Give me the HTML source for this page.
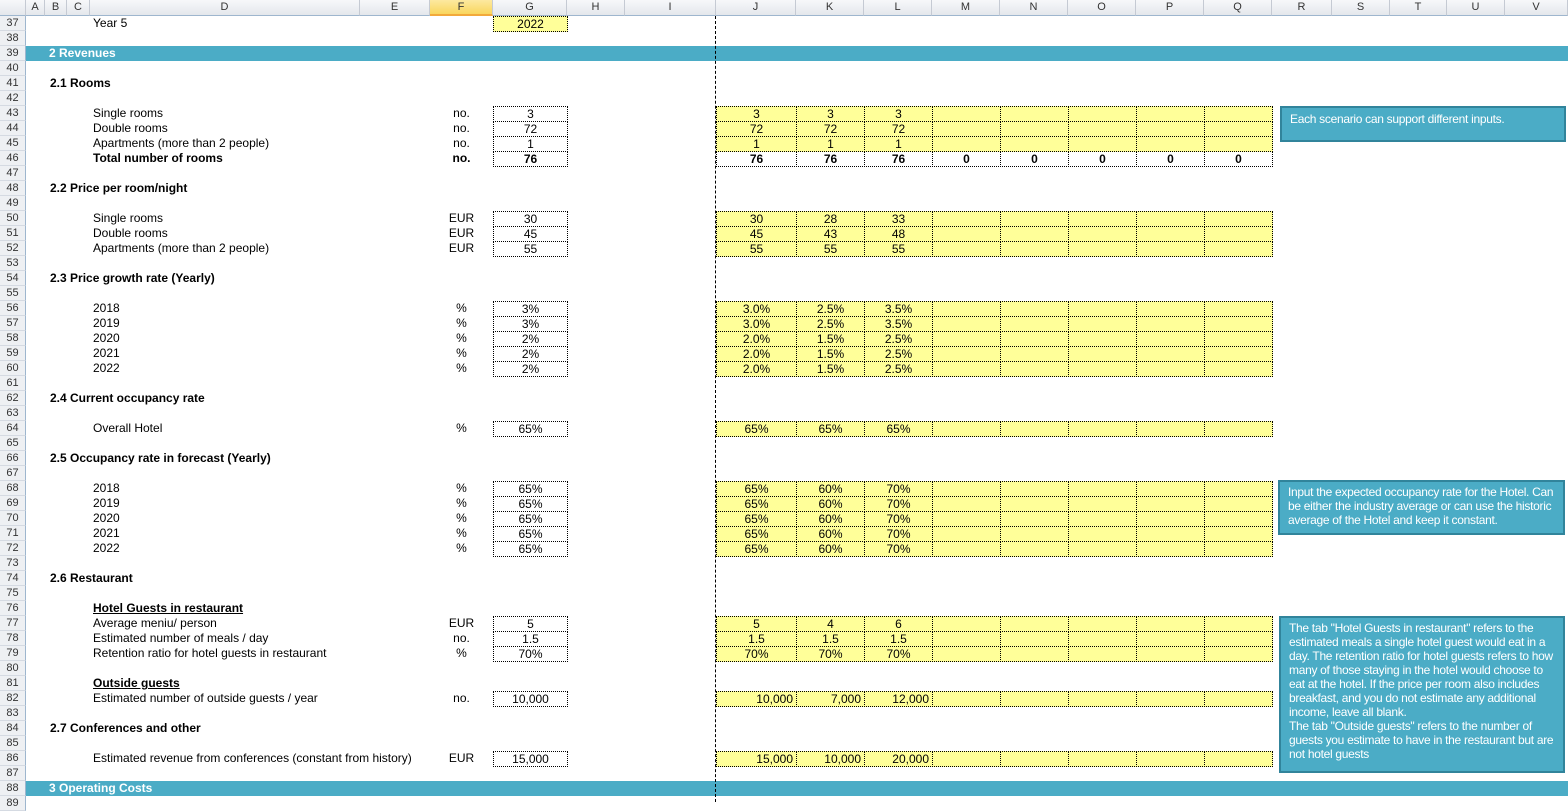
<!DOCTYPE html>
<html><head><meta charset="utf-8">
<style>
*{margin:0;padding:0;box-sizing:border-box}
body{width:1568px;height:802px;overflow:hidden;background:#fff;font-family:"Liberation Sans",Arial,sans-serif;font-size:12px;color:#000;position:relative}
.a{position:absolute;white-space:nowrap}
.ch{position:absolute;top:0;height:16px;background:linear-gradient(#f7f8fa,#e4e7ec);border-right:1px solid #c5cad3;border-bottom:1px solid #9eb6ce;text-align:center;font-size:11px;line-height:15px;color:#333}
.rh{position:absolute;left:0;width:26px;height:15px;background:#eef0f3;border-right:1px solid #9eb6ce;border-bottom:1px solid #d5dae2;font-size:11px;line-height:14px;color:#333;text-align:center}
.t{position:absolute;height:15px;line-height:15px;white-space:nowrap}
.b{font-weight:bold}
.u{position:absolute;left:430px;width:63px;text-align:center;height:15px;line-height:15px}
.c{position:absolute;height:16px;border:1px dotted #000;text-align:center;line-height:14px}
.y{background:#ffff99}
.bar{position:absolute;left:26px;width:1542px;height:15px;background:#4bacc6;color:#fff;font-weight:bold;line-height:15px;padding-left:23px}
.note{position:absolute;background:#4bacc6;border:2px solid #31849b;color:#fff;font-size:12px;line-height:14px;padding:3px 8px;letter-spacing:-0.3px}
.dash{position:absolute;left:715px;top:16px;width:0;height:786px;border-left:1px dashed #000}
</style></head><body>
<!-- column headers -->
<div class="ch" style="left:0;width:26px"></div>
<div class="ch" style="left:26px;width:19px">A</div>
<div class="ch" style="left:45px;width:22px">B</div>
<div class="ch" style="left:67px;width:23px">C</div>
<div class="ch" style="left:90px;width:270px">D</div>
<div class="ch" style="left:360px;width:70px">E</div>
<div class="ch" style="left:430px;width:63px;background:linear-gradient(#fde9a0,#f9d65e);border-bottom:2px solid #f2a93b">F</div>
<div class="ch" style="left:493px;width:74px">G</div>
<div class="ch" style="left:567px;width:58px">H</div>
<div class="ch" style="left:625px;width:91px">I</div>
<div class="ch" style="left:716px;width:80px">J</div>
<div class="ch" style="left:796px;width:68px">K</div>
<div class="ch" style="left:864px;width:68px">L</div>
<div class="ch" style="left:932px;width:68px">M</div>
<div class="ch" style="left:1000px;width:68px">N</div>
<div class="ch" style="left:1068px;width:68px">O</div>
<div class="ch" style="left:1136px;width:68px">P</div>
<div class="ch" style="left:1204px;width:68px">Q</div>
<div class="ch" style="left:1272px;width:60px">R</div>
<div class="ch" style="left:1332px;width:58px">S</div>
<div class="ch" style="left:1390px;width:57px">T</div>
<div class="ch" style="left:1447px;width:58px">U</div>
<div class="ch" style="left:1505px;width:63px">V</div>
<!-- row headers -->
<div class="rh" style="top:16px">37</div><div class="rh" style="top:31px">38</div><div class="rh" style="top:46px">39</div><div class="rh" style="top:61px">40</div><div class="rh" style="top:76px">41</div><div class="rh" style="top:91px">42</div><div class="rh" style="top:106px">43</div><div class="rh" style="top:121px">44</div><div class="rh" style="top:136px">45</div><div class="rh" style="top:151px">46</div><div class="rh" style="top:166px">47</div><div class="rh" style="top:181px">48</div><div class="rh" style="top:196px">49</div><div class="rh" style="top:211px">50</div><div class="rh" style="top:226px">51</div><div class="rh" style="top:241px">52</div><div class="rh" style="top:256px">53</div><div class="rh" style="top:271px">54</div><div class="rh" style="top:286px">55</div><div class="rh" style="top:301px">56</div><div class="rh" style="top:316px">57</div><div class="rh" style="top:331px">58</div><div class="rh" style="top:346px">59</div><div class="rh" style="top:361px">60</div><div class="rh" style="top:376px">61</div><div class="rh" style="top:391px">62</div><div class="rh" style="top:406px">63</div><div class="rh" style="top:421px">64</div><div class="rh" style="top:436px">65</div><div class="rh" style="top:451px">66</div><div class="rh" style="top:466px">67</div><div class="rh" style="top:481px">68</div><div class="rh" style="top:496px">69</div><div class="rh" style="top:511px">70</div><div class="rh" style="top:526px">71</div><div class="rh" style="top:541px">72</div><div class="rh" style="top:556px">73</div><div class="rh" style="top:571px">74</div><div class="rh" style="top:586px">75</div><div class="rh" style="top:601px">76</div><div class="rh" style="top:616px">77</div><div class="rh" style="top:631px">78</div><div class="rh" style="top:646px">79</div><div class="rh" style="top:661px">80</div><div class="rh" style="top:676px">81</div><div class="rh" style="top:691px">82</div><div class="rh" style="top:706px">83</div><div class="rh" style="top:721px">84</div><div class="rh" style="top:736px">85</div><div class="rh" style="top:751px">86</div><div class="rh" style="top:766px">87</div><div class="rh" style="top:781px">88</div><div class="rh" style="top:796px">89</div>

<!-- bars -->
<div class="bar" style="top:46px">2 Revenues</div>
<div class="bar" style="top:781px">3 Operating Costs</div>
<div class="dash"></div>

<!-- row 37 -->
<div class="t" style="left:93px;top:16px">Year 5</div>
<div class="c y" style="left:493px;top:16px;width:75px">2022</div>

<div class="t b" style="left:50px;top:76px">2.1 Rooms</div>
<div class="t" style="left:93px;top:106px">Single rooms</div><div class="u" style="top:106px">no.</div>
<div class="t" style="left:93px;top:121px">Double rooms</div><div class="u" style="top:121px">no.</div>
<div class="t" style="left:93px;top:136px">Apartments (more than 2 people)</div><div class="u" style="top:136px">no.</div>
<div class="t b" style="left:93px;top:151px">Total number of rooms</div><div class="u b" style="top:151px">no.</div>
<div class="c" style="left:493px;top:106px;width:75px">3</div>
<div class="c" style="left:493px;top:121px;width:75px">72</div>
<div class="c" style="left:493px;top:136px;width:75px">1</div>
<div class="c b" style="left:493px;top:151px;width:75px">76</div>

<div class="t b" style="left:50px;top:181px">2.2 Price per room/night</div>
<div class="t" style="left:93px;top:211px">Single rooms</div><div class="u" style="top:211px">EUR</div>
<div class="t" style="left:93px;top:226px">Double rooms</div><div class="u" style="top:226px">EUR</div>
<div class="t" style="left:93px;top:241px">Apartments (more than 2 people)</div><div class="u" style="top:241px">EUR</div>
<div class="c" style="left:493px;top:211px;width:75px">30</div>
<div class="c" style="left:493px;top:226px;width:75px">45</div>
<div class="c" style="left:493px;top:241px;width:75px">55</div>

<div class="t b" style="left:50px;top:271px">2.3 Price growth rate (Yearly)</div>
<div class="t" style="left:93px;top:301px">2018</div><div class="u" style="top:301px">%</div>
<div class="t" style="left:93px;top:316px">2019</div><div class="u" style="top:316px">%</div>
<div class="t" style="left:93px;top:331px">2020</div><div class="u" style="top:331px">%</div>
<div class="t" style="left:93px;top:346px">2021</div><div class="u" style="top:346px">%</div>
<div class="t" style="left:93px;top:361px">2022</div><div class="u" style="top:361px">%</div>
<div class="c" style="left:493px;top:301px;width:75px">3%</div>
<div class="c" style="left:493px;top:316px;width:75px">3%</div>
<div class="c" style="left:493px;top:331px;width:75px">2%</div>
<div class="c" style="left:493px;top:346px;width:75px">2%</div>
<div class="c" style="left:493px;top:361px;width:75px">2%</div>

<div class="t b" style="left:50px;top:391px">2.4 Current occupancy rate</div>
<div class="t" style="left:93px;top:421px">Overall Hotel</div><div class="u" style="top:421px">%</div>
<div class="c" style="left:493px;top:421px;width:75px">65%</div>

<div class="t b" style="left:50px;top:451px">2.5 Occupancy rate in forecast (Yearly)</div>
<div class="t" style="left:93px;top:481px">2018</div><div class="u" style="top:481px">%</div>
<div class="t" style="left:93px;top:496px">2019</div><div class="u" style="top:496px">%</div>
<div class="t" style="left:93px;top:511px">2020</div><div class="u" style="top:511px">%</div>
<div class="t" style="left:93px;top:526px">2021</div><div class="u" style="top:526px">%</div>
<div class="t" style="left:93px;top:541px">2022</div><div class="u" style="top:541px">%</div>
<div class="c" style="left:493px;top:481px;width:75px">65%</div>
<div class="c" style="left:493px;top:496px;width:75px">65%</div>
<div class="c" style="left:493px;top:511px;width:75px">65%</div>
<div class="c" style="left:493px;top:526px;width:75px">65%</div>
<div class="c" style="left:493px;top:541px;width:75px">65%</div>

<div class="t b" style="left:50px;top:571px">2.6 Restaurant</div>
<div class="t b" style="left:93px;top:601px;text-decoration:underline">Hotel Guests in restaurant</div>
<div class="t" style="left:93px;top:616px">Average meniu/ person</div><div class="u" style="top:616px">EUR</div>
<div class="t" style="left:93px;top:631px">Estimated number of meals / day</div><div class="u" style="top:631px">no.</div>
<div class="t" style="left:93px;top:646px">Retention ratio for hotel guests in restaurant</div><div class="u" style="top:646px">%</div>
<div class="c" style="left:493px;top:616px;width:75px">5</div>
<div class="c" style="left:493px;top:631px;width:75px">1.5</div>
<div class="c" style="left:493px;top:646px;width:75px">70%</div>
<div class="t b" style="left:93px;top:676px;text-decoration:underline">Outside guests</div>
<div class="t" style="left:93px;top:691px">Estimated number of outside guests / year</div><div class="u" style="top:691px">no.</div>
<div class="c" style="left:493px;top:691px;width:75px">10,000</div>

<div class="t b" style="left:50px;top:721px">2.7 Conferences and other</div>
<div class="t" style="left:93px;top:751px">Estimated revenue from conferences (constant from history)</div><div class="u" style="top:751px">EUR</div>
<div class="c" style="left:493px;top:751px;width:75px">15,000</div>

<!-- scenario grid J..Q -->
<!-- rows 43-45 -->
<div class="c y" style="left:716px;top:106px;width:81px">3</div><div class="c y" style="left:796px;top:106px;width:69px">3</div><div class="c y" style="left:864px;top:106px;width:69px">3</div><div class="c y" style="left:932px;top:106px;width:69px"></div><div class="c y" style="left:1000px;top:106px;width:69px"></div><div class="c y" style="left:1068px;top:106px;width:69px"></div><div class="c y" style="left:1136px;top:106px;width:69px"></div><div class="c y" style="left:1204px;top:106px;width:69px"></div>
<div class="c y" style="left:716px;top:121px;width:81px">72</div><div class="c y" style="left:796px;top:121px;width:69px">72</div><div class="c y" style="left:864px;top:121px;width:69px">72</div><div class="c y" style="left:932px;top:121px;width:69px"></div><div class="c y" style="left:1000px;top:121px;width:69px"></div><div class="c y" style="left:1068px;top:121px;width:69px"></div><div class="c y" style="left:1136px;top:121px;width:69px"></div><div class="c y" style="left:1204px;top:121px;width:69px"></div>
<div class="c y" style="left:716px;top:136px;width:81px">1</div><div class="c y" style="left:796px;top:136px;width:69px">1</div><div class="c y" style="left:864px;top:136px;width:69px">1</div><div class="c y" style="left:932px;top:136px;width:69px"></div><div class="c y" style="left:1000px;top:136px;width:69px"></div><div class="c y" style="left:1068px;top:136px;width:69px"></div><div class="c y" style="left:1136px;top:136px;width:69px"></div><div class="c y" style="left:1204px;top:136px;width:69px"></div>
<div class="c b" style="left:716px;top:151px;width:81px">76</div><div class="c b" style="left:796px;top:151px;width:69px">76</div><div class="c b" style="left:864px;top:151px;width:69px">76</div><div class="c b" style="left:932px;top:151px;width:69px">0</div><div class="c b" style="left:1000px;top:151px;width:69px">0</div><div class="c b" style="left:1068px;top:151px;width:69px">0</div><div class="c b" style="left:1136px;top:151px;width:69px">0</div><div class="c b" style="left:1204px;top:151px;width:69px">0</div>
<!-- 50-52 -->
<div class="c y" style="left:716px;top:211px;width:81px">30</div><div class="c y" style="left:796px;top:211px;width:69px">28</div><div class="c y" style="left:864px;top:211px;width:69px">33</div><div class="c y" style="left:932px;top:211px;width:69px"></div><div class="c y" style="left:1000px;top:211px;width:69px"></div><div class="c y" style="left:1068px;top:211px;width:69px"></div><div class="c y" style="left:1136px;top:211px;width:69px"></div><div class="c y" style="left:1204px;top:211px;width:69px"></div>
<div class="c y" style="left:716px;top:226px;width:81px">45</div><div class="c y" style="left:796px;top:226px;width:69px">43</div><div class="c y" style="left:864px;top:226px;width:69px">48</div><div class="c y" style="left:932px;top:226px;width:69px"></div><div class="c y" style="left:1000px;top:226px;width:69px"></div><div class="c y" style="left:1068px;top:226px;width:69px"></div><div class="c y" style="left:1136px;top:226px;width:69px"></div><div class="c y" style="left:1204px;top:226px;width:69px"></div>
<div class="c y" style="left:716px;top:241px;width:81px">55</div><div class="c y" style="left:796px;top:241px;width:69px">55</div><div class="c y" style="left:864px;top:241px;width:69px">55</div><div class="c y" style="left:932px;top:241px;width:69px"></div><div class="c y" style="left:1000px;top:241px;width:69px"></div><div class="c y" style="left:1068px;top:241px;width:69px"></div><div class="c y" style="left:1136px;top:241px;width:69px"></div><div class="c y" style="left:1204px;top:241px;width:69px"></div>
<!-- 56-60 -->
<div class="c y" style="left:716px;top:301px;width:81px">3.0%</div><div class="c y" style="left:796px;top:301px;width:69px">2.5%</div><div class="c y" style="left:864px;top:301px;width:69px">3.5%</div><div class="c y" style="left:932px;top:301px;width:69px"></div><div class="c y" style="left:1000px;top:301px;width:69px"></div><div class="c y" style="left:1068px;top:301px;width:69px"></div><div class="c y" style="left:1136px;top:301px;width:69px"></div><div class="c y" style="left:1204px;top:301px;width:69px"></div>
<div class="c y" style="left:716px;top:316px;width:81px">3.0%</div><div class="c y" style="left:796px;top:316px;width:69px">2.5%</div><div class="c y" style="left:864px;top:316px;width:69px">3.5%</div><div class="c y" style="left:932px;top:316px;width:69px"></div><div class="c y" style="left:1000px;top:316px;width:69px"></div><div class="c y" style="left:1068px;top:316px;width:69px"></div><div class="c y" style="left:1136px;top:316px;width:69px"></div><div class="c y" style="left:1204px;top:316px;width:69px"></div>
<div class="c y" style="left:716px;top:331px;width:81px">2.0%</div><div class="c y" style="left:796px;top:331px;width:69px">1.5%</div><div class="c y" style="left:864px;top:331px;width:69px">2.5%</div><div class="c y" style="left:932px;top:331px;width:69px"></div><div class="c y" style="left:1000px;top:331px;width:69px"></div><div class="c y" style="left:1068px;top:331px;width:69px"></div><div class="c y" style="left:1136px;top:331px;width:69px"></div><div class="c y" style="left:1204px;top:331px;width:69px"></div>
<div class="c y" style="left:716px;top:346px;width:81px">2.0%</div><div class="c y" style="left:796px;top:346px;width:69px">1.5%</div><div class="c y" style="left:864px;top:346px;width:69px">2.5%</div><div class="c y" style="left:932px;top:346px;width:69px"></div><div class="c y" style="left:1000px;top:346px;width:69px"></div><div class="c y" style="left:1068px;top:346px;width:69px"></div><div class="c y" style="left:1136px;top:346px;width:69px"></div><div class="c y" style="left:1204px;top:346px;width:69px"></div>
<div class="c y" style="left:716px;top:361px;width:81px">2.0%</div><div class="c y" style="left:796px;top:361px;width:69px">1.5%</div><div class="c y" style="left:864px;top:361px;width:69px">2.5%</div><div class="c y" style="left:932px;top:361px;width:69px"></div><div class="c y" style="left:1000px;top:361px;width:69px"></div><div class="c y" style="left:1068px;top:361px;width:69px"></div><div class="c y" style="left:1136px;top:361px;width:69px"></div><div class="c y" style="left:1204px;top:361px;width:69px"></div>
<!-- 64 -->
<div class="c y" style="left:716px;top:421px;width:81px">65%</div><div class="c y" style="left:796px;top:421px;width:69px">65%</div><div class="c y" style="left:864px;top:421px;width:69px">65%</div><div class="c y" style="left:932px;top:421px;width:69px"></div><div class="c y" style="left:1000px;top:421px;width:69px"></div><div class="c y" style="left:1068px;top:421px;width:69px"></div><div class="c y" style="left:1136px;top:421px;width:69px"></div><div class="c y" style="left:1204px;top:421px;width:69px"></div>
<!-- 68-72 -->
<div class="c y" style="left:716px;top:481px;width:81px">65%</div><div class="c y" style="left:796px;top:481px;width:69px">60%</div><div class="c y" style="left:864px;top:481px;width:69px">70%</div><div class="c y" style="left:932px;top:481px;width:69px"></div><div class="c y" style="left:1000px;top:481px;width:69px"></div><div class="c y" style="left:1068px;top:481px;width:69px"></div><div class="c y" style="left:1136px;top:481px;width:69px"></div><div class="c y" style="left:1204px;top:481px;width:69px"></div>
<div class="c y" style="left:716px;top:496px;width:81px">65%</div><div class="c y" style="left:796px;top:496px;width:69px">60%</div><div class="c y" style="left:864px;top:496px;width:69px">70%</div><div class="c y" style="left:932px;top:496px;width:69px"></div><div class="c y" style="left:1000px;top:496px;width:69px"></div><div class="c y" style="left:1068px;top:496px;width:69px"></div><div class="c y" style="left:1136px;top:496px;width:69px"></div><div class="c y" style="left:1204px;top:496px;width:69px"></div>
<div class="c y" style="left:716px;top:511px;width:81px">65%</div><div class="c y" style="left:796px;top:511px;width:69px">60%</div><div class="c y" style="left:864px;top:511px;width:69px">70%</div><div class="c y" style="left:932px;top:511px;width:69px"></div><div class="c y" style="left:1000px;top:511px;width:69px"></div><div class="c y" style="left:1068px;top:511px;width:69px"></div><div class="c y" style="left:1136px;top:511px;width:69px"></div><div class="c y" style="left:1204px;top:511px;width:69px"></div>
<div class="c y" style="left:716px;top:526px;width:81px">65%</div><div class="c y" style="left:796px;top:526px;width:69px">60%</div><div class="c y" style="left:864px;top:526px;width:69px">70%</div><div class="c y" style="left:932px;top:526px;width:69px"></div><div class="c y" style="left:1000px;top:526px;width:69px"></div><div class="c y" style="left:1068px;top:526px;width:69px"></div><div class="c y" style="left:1136px;top:526px;width:69px"></div><div class="c y" style="left:1204px;top:526px;width:69px"></div>
<div class="c y" style="left:716px;top:541px;width:81px">65%</div><div class="c y" style="left:796px;top:541px;width:69px">60%</div><div class="c y" style="left:864px;top:541px;width:69px">70%</div><div class="c y" style="left:932px;top:541px;width:69px"></div><div class="c y" style="left:1000px;top:541px;width:69px"></div><div class="c y" style="left:1068px;top:541px;width:69px"></div><div class="c y" style="left:1136px;top:541px;width:69px"></div><div class="c y" style="left:1204px;top:541px;width:69px"></div>
<!-- 77-79 -->
<div class="c y" style="left:716px;top:616px;width:81px">5</div><div class="c y" style="left:796px;top:616px;width:69px">4</div><div class="c y" style="left:864px;top:616px;width:69px">6</div><div class="c y" style="left:932px;top:616px;width:69px"></div><div class="c y" style="left:1000px;top:616px;width:69px"></div><div class="c y" style="left:1068px;top:616px;width:69px"></div><div class="c y" style="left:1136px;top:616px;width:69px"></div><div class="c y" style="left:1204px;top:616px;width:69px"></div>
<div class="c y" style="left:716px;top:631px;width:81px">1.5</div><div class="c y" style="left:796px;top:631px;width:69px">1.5</div><div class="c y" style="left:864px;top:631px;width:69px">1.5</div><div class="c y" style="left:932px;top:631px;width:69px"></div><div class="c y" style="left:1000px;top:631px;width:69px"></div><div class="c y" style="left:1068px;top:631px;width:69px"></div><div class="c y" style="left:1136px;top:631px;width:69px"></div><div class="c y" style="left:1204px;top:631px;width:69px"></div>
<div class="c y" style="left:716px;top:646px;width:81px">70%</div><div class="c y" style="left:796px;top:646px;width:69px">70%</div><div class="c y" style="left:864px;top:646px;width:69px">70%</div><div class="c y" style="left:932px;top:646px;width:69px"></div><div class="c y" style="left:1000px;top:646px;width:69px"></div><div class="c y" style="left:1068px;top:646px;width:69px"></div><div class="c y" style="left:1136px;top:646px;width:69px"></div><div class="c y" style="left:1204px;top:646px;width:69px"></div>
<!-- 82 -->
<div class="c y" style="left:716px;top:691px;width:81px;text-align:right;padding-right:3px">10,000</div><div class="c y" style="left:796px;top:691px;width:69px;text-align:right;padding-right:3px">7,000</div><div class="c y" style="left:864px;top:691px;width:69px;text-align:right;padding-right:3px">12,000</div><div class="c y" style="left:932px;top:691px;width:69px"></div><div class="c y" style="left:1000px;top:691px;width:69px"></div><div class="c y" style="left:1068px;top:691px;width:69px"></div><div class="c y" style="left:1136px;top:691px;width:69px"></div><div class="c y" style="left:1204px;top:691px;width:69px"></div>
<!-- 86 -->
<div class="c y" style="left:716px;top:751px;width:81px;text-align:right;padding-right:3px">15,000</div><div class="c y" style="left:796px;top:751px;width:69px;text-align:right;padding-right:3px">10,000</div><div class="c y" style="left:864px;top:751px;width:69px;text-align:right;padding-right:3px">20,000</div><div class="c y" style="left:932px;top:751px;width:69px"></div><div class="c y" style="left:1000px;top:751px;width:69px"></div><div class="c y" style="left:1068px;top:751px;width:69px"></div><div class="c y" style="left:1136px;top:751px;width:69px"></div><div class="c y" style="left:1204px;top:751px;width:69px"></div>

<!-- notes -->
<div class="note" style="left:1280px;top:106px;width:286px;height:36px;padding-top:4px">Each scenario can support different inputs.</div>
<div class="note" style="left:1278px;top:480px;width:287px;height:55px">Input the expected occupancy rate for the Hotel. Can be either the industry average or can use the historic average of the Hotel and keep it constant.</div>
<div class="note" style="left:1279px;top:616px;width:286px;height:157px">The tab "Hotel Guests in restaurant" refers to the estimated meals a single hotel guest would eat in a day.  The retention ratio for hotel guests refers to how many of those staying in the hotel would choose to eat at the hotel. If the price per room also includes breakfast, and you do not estimate any  additional income, leave all blank.<br>The tab "Outside guests" refers to the number of guests you estimate to have in the restaurant but are not hotel guests</div>
</body></html>
